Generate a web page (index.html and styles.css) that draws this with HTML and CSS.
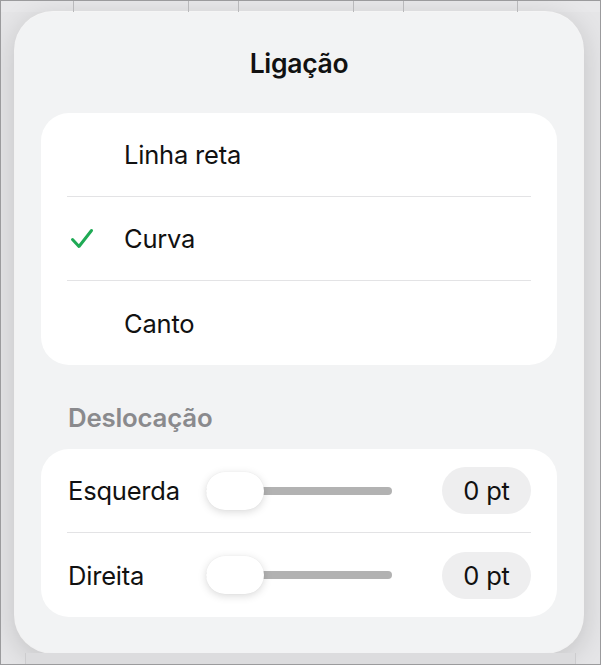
FILE: index.html
```html
<!DOCTYPE html>
<html lang="pt">
<head>
    <meta charset="UTF-8">
    <meta name="viewport" content="width=device-width, initial-scale=1.0">
    <title>Ligação</title>
    <link rel="stylesheet" href="styles.css">
</head>
<body>
    <div class="screen">
        <div class="backdrop-strip">
            <span></span><span></span><span></span><span></span><span></span><span></span><span></span>
        </div>

        <div class="popover">
            <h1 class="popover-title">Ligação</h1>

            <div class="card">
                <div class="option-row">
                    <span class="check"></span>
                    <span class="option-label">Linha reta</span>
                </div>
                <div class="option-row">
                    <span class="check">
                        <svg viewBox="0 0 24 24" fill="none" xmlns="http://www.w3.org/2000/svg">
                            <path d="M2.5 12.5L9 19.5L21.5 3.5" stroke="currentColor" stroke-width="3" stroke-linecap="round" stroke-linejoin="round"/>
                        </svg>
                    </span>
                    <span class="option-label">Curva</span>
                </div>
                <div class="option-row">
                    <span class="check"></span>
                    <span class="option-label">Canto</span>
                </div>
            </div>

            <div class="section-header">Deslocação</div>

            <div class="card">
                <div class="slider-row">
                    <span class="slider-label">Esquerda</span>
                    <div class="slider">
                        <div class="slider-track"></div>
                        <div class="slider-thumb"></div>
                    </div>
                    <span class="value-pill">0 pt</span>
                </div>
                <div class="slider-row">
                    <span class="slider-label">Direita</span>
                    <div class="slider">
                        <div class="slider-track"></div>
                        <div class="slider-thumb"></div>
                    </div>
                    <span class="value-pill">0 pt</span>
                </div>
            </div>
        </div>

        <div class="backdrop-bottom"></div>
    </div>
</body>
</html>
```

FILE: styles.css
```css
:root {
    --page-bg: #e5e5e7;
    --popover-bg: #f2f3f4;
    --card-bg: #fff;
    --divider: #e3e3e5;
    --text-color: #111;
    --muted-color: #8a8a8d;
    --check-color: #1faa55;
    --track-color: #b2b2b2;
    --pill-bg: #eeeeef;
}

* {
    margin: 0;
    padding: 0;
    box-sizing: border-box;
}

body {
    width: 601px;
    height: 665px;
    overflow: hidden;
    font-family: Inter, "Noto Sans", "Liberation Sans", sans-serif;
    color: var(--text-color);
    background-color: var(--page-bg);
}

.screen {
    width: 601px;
    height: 665px;
    border: 1px solid #9b9b9d;
    background-color: var(--page-bg);
    overflow: hidden;
}

.backdrop-strip {
    height: 11px;
    display: grid;
    grid-template-columns: 73px 115px 50px 115px 50px 114px 1fr;
    background-color: #e8e8ea;
}

.backdrop-strip span {
    border-right: 1px solid #b9b9bb;
}

.backdrop-strip span:last-child {
    border-right: none;
}

.popover {
    width: 568px;
    height: 641px;
    margin-left: 14px;
    padding: 0 26px;
    background-color: var(--popover-bg);
    border-radius: 38px;
    box-shadow: 0 0 0 1px rgba(255, 255, 255, 0.7), 0 6px 28px rgba(0, 0, 0, 0.16);
}

.popover-title {
    height: 101px;
    display: flex;
    align-items: center;
    justify-content: center;
    font-size: 26.5px;
    font-weight: 600;
    letter-spacing: -0.3px;
}

.card {
    background-color: var(--card-bg);
    border-radius: 28px;
    padding: 0 26px;
}

.option-row {
    height: 84px;
    display: flex;
    align-items: center;
    border-bottom: 1px solid var(--divider);
}

.option-row:last-child,
.slider-row:last-child {
    border-bottom: none;
}

.check {
    width: 57px;
    padding-left: 3px;
    color: var(--check-color);
    display: flex;
    align-items: center;
}

.check svg {
    width: 24px;
    height: 24px;
}

.option-label,
.slider-label {
    font-size: 25.5px;
    letter-spacing: -0.2px;
}

.section-header {
    height: 84px;
    display: flex;
    align-items: center;
    padding-left: 27px;
    padding-top: 20px;
    font-size: 25.8px;
    font-weight: 600;
    letter-spacing: -0.2px;
    color: var(--muted-color);
}

.slider-row {
    height: 84px;
    display: grid;
    grid-template-columns: 139px 186px 1fr 89px;
    align-items: center;
    border-bottom: 1px solid var(--divider);
}

.slider-label {
    padding-left: 1px;
}

.slider {
    height: 38px;
    display: flex;
    align-items: center;
    position: relative;
}

.slider-track {
    width: 100%;
    height: 8px;
    border-radius: 4px;
    background-color: var(--track-color);
}

.slider-thumb {
    position: absolute;
    left: 0;
    top: 0;
    width: 58px;
    height: 38px;
    border-radius: 19px;
    background-color: #fff;
    box-shadow: 0 2px 9px rgba(0, 0, 0, 0.15), 0 0 1px rgba(0, 0, 0, 0.08);
}

.value-pill {
    grid-column: 4;
    height: 47px;
    border-radius: 24px;
    background-color: var(--pill-bg);
    display: flex;
    align-items: center;
    justify-content: center;
    font-size: 25.5px;
    letter-spacing: -0.2px;
}

.backdrop-bottom {
    height: 20px;
    margin: 0 24px;
    background-color: #dcdcde;
    border-left: 1px solid #cdcdcf;
    border-right: 1px solid #cdcdcf;
}
```
